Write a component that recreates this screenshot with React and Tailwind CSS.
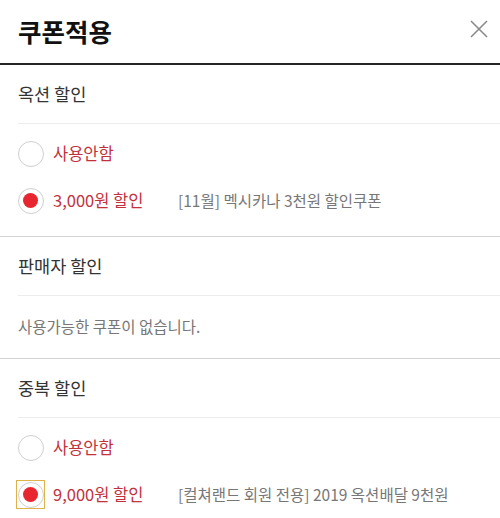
import React, { useState } from 'react';

// Coupon sections
const sections = [
  {
    title: '옥션 할인',
    options: [
      { id: 'none', label: '사용안함' },
      { id: 'c3000', label: '3,000원 할인', desc: '[11월] 멕시카나 3천원 할인쿠폰' },
    ],
    initial: 'c3000',
  },
  {
    title: '판매자 할인',
    empty: '사용가능한 쿠폰이 없습니다.',
  },
  {
    title: '중복 할인',
    options: [
      { id: 'none', label: '사용안함' },
      { id: 'c9000', label: '9,000원 할인', desc: '[컬쳐랜드 회원 전용] 2019 옥션배달 9천원', focus: true },
    ],
    initial: 'c9000',
  },
];

function Radio({ checked, focus }) {
  return (
    <div
      className={`w-[27px] h-[27px] flex items-center justify-center shrink-0 ${
        focus ? 'outline outline-[1.5px] outline-[#e0b24a]' : ''
      }`}
    >
      <div className="w-[26px] h-[26px] rounded-full border-[1.5px] border-[#cfcfcf] bg-white flex items-center justify-center">
        {checked && <div className="w-[15px] h-[15px] rounded-full bg-[#e8262f]" />}
      </div>
    </div>
  );
}

function Section({ section, last }) {
  const [selected, setSelected] = useState(section.initial);

  return (
    <div className={last ? '' : 'border-b-[1.5px] border-[#d2d2d2]'}>
      <div className="ml-[18px] h-[59px] flex items-center border-b border-[#ececec] text-[17.5px] text-[#333]">
        {section.title}
      </div>
      {section.empty ? (
        <div className="h-[62px] pl-[18px] flex items-center text-[15.5px] text-[#777]">{section.empty}</div>
      ) : (
        <div className="pt-[6px] pb-[12px]">
          {section.options.map((opt) => (
            <div
              key={opt.id}
              className="h-[47px] pl-[17px] flex items-center cursor-pointer"
              onClick={() => setSelected(opt.id)}
            >
              <Radio checked={selected === opt.id} focus={opt.focus} />
              <span className="ml-[9px] w-[125px] text-[16.5px] text-[#c3313d]">{opt.label}</span>
              {opt.desc && <span className="text-[15.5px] text-[#777]">{opt.desc}</span>}
            </div>
          ))}
        </div>
      )}
    </div>
  );
}

export default function App() {
  return (
    <div
      className="w-[500px] min-h-[518px] bg-white"
      style={{ fontFamily: '"Noto Sans CJK KR", "Noto Sans", sans-serif' }}
    >
      <div className="h-[65px] flex items-center justify-between pl-[18px] pr-[11px] border-b-2 border-[#262626]">
        <h1 className="text-[25.5px] font-bold text-[#111]">쿠폰적용</h1>
        <button className="w-[20px] h-[20px] mb-[6px] flex items-center justify-center">
          <svg width="18" height="18" viewBox="0 0 18 18" fill="none" stroke="#8a8a8a" strokeWidth="1.6">
            <path d="M1 1L17 17M17 1L1 17" />
          </svg>
        </button>
      </div>
      {sections.map((s, i) => (
        <Section key={s.title} section={s} last={i === sections.length - 1} />
      ))}
    </div>
  );
}
